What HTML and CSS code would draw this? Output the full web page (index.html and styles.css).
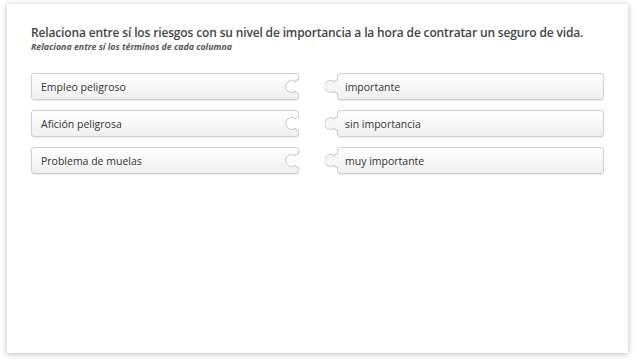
FILE: index.html
```html
<!DOCTYPE html>
<html lang="es">
<head>
    <meta charset="UTF-8">
    <title>Relaciona columnas</title>
    <link rel="stylesheet" href="styles.css">
</head>
<body>
    <main class="card">
        <h1 class="question">Relaciona entre sí los riesgos con su nivel de importancia a la hora de contratar un seguro de vida.</h1>
        <p class="hint">Relaciona entre sí los términos de cada columna</p>

        <div class="match-grid">
            <div class="cell">
                <div class="piece piece-left">Empleo peligroso
                    <svg class="notch" width="14" height="27" viewBox="0 0 14 27"><path class="hole" d="M14 7 H12 Q10.2 7 10.6 9 A6 6 0 1 0 10.6 18 Q10.2 20 12 20 H14 Z"/><path class="edge" d="M13.5 7 H12 Q10.2 7 10.6 9 A6 6 0 1 0 10.6 18 Q10.2 20 12 20 H13.5"/></svg>
                </div>
            </div>
            <div class="cell cell-right">
                <div class="piece piece-right">importante
                    <svg class="tab" width="14" height="27" viewBox="0 0 14 27"><path class="knob" d="M14 7 H11 Q9.2 7 9.6 9 A6 6 0 1 0 9.6 18 Q9.2 20 11 20 H14 Z"/><path class="edge" d="M12.5 7 H11 Q9.2 7 9.6 9 A6 6 0 1 0 9.6 18 Q9.2 20 11 20 H12.5"/></svg>
                </div>
            </div>

            <div class="cell">
                <div class="piece piece-left">Afición peligrosa
                    <svg class="notch" width="14" height="27" viewBox="0 0 14 27"><path class="hole" d="M14 7 H12 Q10.2 7 10.6 9 A6 6 0 1 0 10.6 18 Q10.2 20 12 20 H14 Z"/><path class="edge" d="M13.5 7 H12 Q10.2 7 10.6 9 A6 6 0 1 0 10.6 18 Q10.2 20 12 20 H13.5"/></svg>
                </div>
            </div>
            <div class="cell cell-right">
                <div class="piece piece-right">sin importancia
                    <svg class="tab" width="14" height="27" viewBox="0 0 14 27"><path class="knob" d="M14 7 H11 Q9.2 7 9.6 9 A6 6 0 1 0 9.6 18 Q9.2 20 11 20 H14 Z"/><path class="edge" d="M12.5 7 H11 Q9.2 7 9.6 9 A6 6 0 1 0 9.6 18 Q9.2 20 11 20 H12.5"/></svg>
                </div>
            </div>

            <div class="cell">
                <div class="piece piece-left">Problema de muelas
                    <svg class="notch" width="14" height="27" viewBox="0 0 14 27"><path class="hole" d="M14 7 H12 Q10.2 7 10.6 9 A6 6 0 1 0 10.6 18 Q10.2 20 12 20 H14 Z"/><path class="edge" d="M13.5 7 H12 Q10.2 7 10.6 9 A6 6 0 1 0 10.6 18 Q10.2 20 12 20 H13.5"/></svg>
                </div>
            </div>
            <div class="cell cell-right">
                <div class="piece piece-right">muy importante
                    <svg class="tab" width="14" height="27" viewBox="0 0 14 27"><path class="knob" d="M14 7 H11 Q9.2 7 9.6 9 A6 6 0 1 0 9.6 18 Q9.2 20 11 20 H14 Z"/><path class="edge" d="M12.5 7 H11 Q9.2 7 9.6 9 A6 6 0 1 0 9.6 18 Q9.2 20 11 20 H12.5"/></svg>
                </div>
            </div>
        </div>
    </main>
</body>
</html>
```

FILE: styles.css
```css
body {
    margin: 0;
    padding: 4px 8px 11px 7px;
    background: #fff;
    font-family: 'Open Sans', sans-serif;
    color: #333;
}
.card {
    height: 349px;
    box-sizing: border-box;
    background: #fff;
    padding: 21px 24px;
    box-shadow: 0 1px 6px rgba(0, 0, 0, 0.28);
}
.question {
    margin: 0;
    font-size: 12px;
    font-weight: 600;
    letter-spacing: -0.15px;
    line-height: 16px;
    color: #444;
}
.hint {
    margin: 0;
    font-size: 8.8px;
    font-style: italic;
    font-weight: 700;
    line-height: 13px;
    color: #555;
}
.match-grid {
    display: grid;
    grid-template-columns: 268px 279px;
    column-gap: 26px;
    row-gap: 10px;
    margin-top: 19px;
}
.cell-right {
    padding-left: 12px;
}
.piece {
    position: relative;
    height: 27px;
    box-sizing: border-box;
    border: 1px solid #cfcfcf;
    border-radius: 3px;
    background: linear-gradient(#ffffff, #efefef);
    box-shadow: 0 1px 1px rgba(0, 0, 0, 0.08);
    padding: 0 9px;
    font-size: 10.5px;
    line-height: 26px;
    color: #333;
}
.piece-right {
    padding: 0 7px;
}
.notch {
    position: absolute;
    right: -1px;
    top: -1px;
}
.tab {
    position: absolute;
    left: -13px;
    top: -1px;
}
.hole {
    fill: #fff;
}
.knob {
    fill: #f6f6f6;
}
.edge {
    fill: none;
    stroke: #c8c8c8;
    stroke-width: 1;
}
```
